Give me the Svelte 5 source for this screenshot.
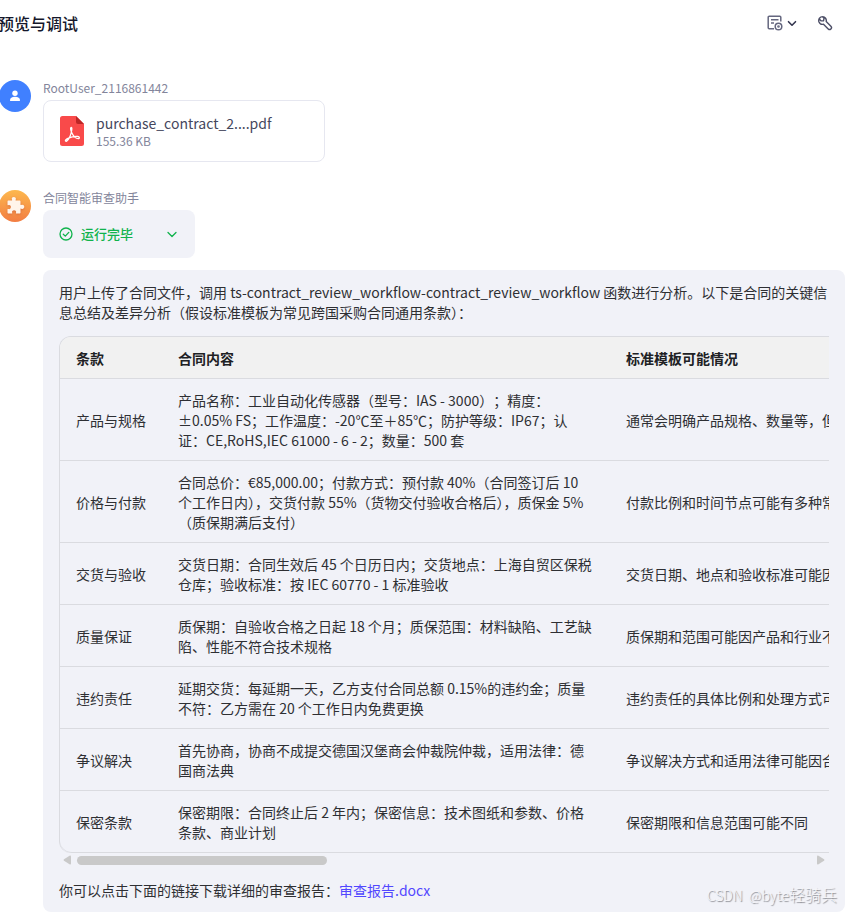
<script>
  const columns = ['条款', '合同内容', '标准模板可能情况'];

  const rows = [
    {
      term: '产品与规格',
      content: '产品名称：工业自动化传感器（型号：IAS - 3000）\u200b；精度：±0.05% FS；工作温度：-20℃至＋85℃；防护等级：IP67；认证：CE,RoHS,IEC 61000 - 6 - 2；数量：500 套',
      template: '通常会明确产品规格、数量等，但'
    },
    {
      term: '价格与付款',
      content: '合同总价：€85,000.00；付款方式：预付款 40%（合同签订后 10 个工作日内），交货付款 55%（货物交付验收合格后），质保金 5%（质保期满后支付）',
      template: '付款比例和时间节点可能有多种常'
    },
    {
      term: '交货与验收',
      content: '交货日期：合同生效后 45 个日历日内；交货地点：上海自贸区保税仓库；验收标准：按 IEC 60770 - 1 标准验收',
      template: '交货日期、地点和验收标准可能因'
    },
    {
      term: '质量保证',
      content: '质保期：自验收合格之日起 18 个月；质保范围：材料缺陷、工艺缺陷、性能不符合技术规格',
      template: '质保期和范围可能因产品和行业不'
    },
    {
      term: '违约责任',
      content: '延期交货：每延期一天，乙方支付合同总额 0.15%的违约金；质量不符：乙方需在 20 个工作日内免费更换',
      template: '违约责任的具体比例和处理方式可'
    },
    {
      term: '争议解决',
      content: '首先协商，协商不成提交德国汉堡商会仲裁院仲裁，适用法律：德国商法典',
      template: '争议解决方式和适用法律可能因合'
    },
    {
      term: '保密条款',
      content: '保密期限：合同终止后 2 年内；保密信息：技术图纸和参数、价格条款、商业计划',
      template: '保密期限和信息范围可能不同'
    }
  ];
</script>

<div class="page">
  <header class="topbar">
    <h1>预览与调试</h1>
    <div class="tools">
      <button class="tool" aria-label="Preview settings">
        <svg width="16" height="16" viewBox="0 0 16 16" fill="none" stroke="#65677f" stroke-width="1.500">
          <path d="M7 13.700H2.200a1 1 0 0 1-1-1V2.200a1 1 0 0 1 1-1h10.600a1 1 0 0 1 1 1V6.500" />
          <path d="M4 4.700h7.500M4 8h3" />
          <circle cx="11.500" cy="11.500" r="3.300" />
          <circle cx="11.500" cy="11.500" r="0.600" />
        </svg>
        <svg width="10" height="16" viewBox="0 0 10 16" fill="none" stroke="#34364f" stroke-width="1.600" stroke-linecap="round" stroke-linejoin="round">
          <path d="M1.500 6.700 5 10.200l3.500-3.500" />
        </svg>
      </button>
      <button class="tool" aria-label="Debug">
        <svg width="16" height="16" viewBox="0 0 16 16" fill="none" stroke="#4c4e66" stroke-width="1.400" stroke-linejoin="round">
          <path d="M5.600 1.600A4 4 0 0 0 1.900 6.700a4 4 0 0 0 4.600 2.500l4.700 4.700a1.850 1.850 0 0 0 2.700-2.700L9.200 6.500A4 4 0 0 0 5.600 1.600L7 3.300 6.600 5.700 4.200 5.900 2.500 4.200" />
        </svg>
      </button>
    </div>
  </header>

  <main class="chat">
    <section class="message">
      <div class="avatar user">
        <svg width="12" height="12" viewBox="0 0 12 12" fill="#fff">
          <circle cx="6" cy="3.300" r="2.700" />
          <path d="M1 10.200C1 8 2.800 6.800 6 6.800s5 1.200 5 3.400c0 .6-.3.900-.9.900H1.900c-.6 0-.9-.3-.9-.9z" />
        </svg>
      </div>
      <div class="body">
        <div class="name">RootUser_2116861442</div>
        <div class="file">
          <svg width="24" height="30" viewBox="0 0 24 30">
            <path d="M2.500 0H16l8 8v19.500a2.500 2.500 0 0 1-2.500 2.500h-19A2.500 2.500 0 0 1 0 27.500v-25A2.500 2.500 0 0 1 2.500 0z" fill="#f94a4a" />
            <path d="M16 0l8 8h-6a2 2 0 0 1-2-2z" fill="#bc2626" />
            <path d="M11.400 11.300c-1.300 0-.8 3.300.6 6 1.600 3.100 4.200 5.300 6.200 5.300 1.700 0 1.500-2-.5-2.200-3-.3-6.700.5-9.200 1.700-2.200 1-3.600 2.400-2.900 3 1 .9 3.200-1.900 4.600-5.200 1.300-3 2.200-8.500 1.200-8.600z" fill="none" stroke="#fff" stroke-width="1.300" />
          </svg>
          <div class="file-info">
            <div class="file-name">purchase_contract_2....pdf</div>
            <div class="file-size">155.36 KB</div>
          </div>
        </div>
      </div>
    </section>

    <section class="message">
      <div class="avatar bot">
        <svg width="20" height="20" viewBox="0 0 20 20" fill="#fff4ea">
          <path d="M3.600 4.500h3.100c.5 0 .5-.4.300-.8C6.200 2 7.200.900 8.800.900s2.600 1.100 1.900 2.800c-.2.400-.2.800.3.800h3.400c.7 0 1.100.4 1.100 1.100v2.900c0 .5.4.6.8.4 1.500-.7 3 .3 3 1.900s-1.500 2.600-3 1.900c-.4-.2-.8-.1-.8.400v3.300c0 .7-.4 1.100-1.100 1.100h-3c-.5 0-.6-.4-.4-.8.600-1.300-.4-2.500-1.900-2.500s-2.500 1.200-1.900 2.500c.2.400.1.800-.4.800H3.600c-.7 0-1.100-.4-1.100-1.100v-3c0-.5.4-.6.8-.4 1.400.5 2.600-.5 2.600-1.900S4.700 8.700 3.300 9.200c-.4.200-.8 0-.8-.5V5.600c0-.7.4-1.100 1.100-1.100z" />
        </svg>
      </div>
      <div class="body">
        <div class="name">合同智能审查助手</div>
        <button class="status">
          <svg width="14" height="14" viewBox="0 0 14 14" fill="none" stroke="#10b34c" stroke-width="1.300" stroke-linecap="round" stroke-linejoin="round">
            <circle cx="7" cy="7" r="6" />
            <path d="M4.300 7.200l2 1.900 3.500-3.700" />
          </svg>
          <span>运行完毕</span>
          <svg class="arrow" width="10" height="10" viewBox="0 0 10 10" fill="none" stroke="#10b34c" stroke-width="1.300" stroke-linecap="round" stroke-linejoin="round">
            <path d="M1 3.500l4 4 4-4" />
          </svg>
        </button>

        <article class="bubble">
          <p>用户上传了合同文件，调用 ts-contract_review_workflow-contract_review_workflow 函数进行分析。以下是合同的关键信息总结及差异分析（假设标准模板为常见跨国采购合同通用条款）：</p>

          <div class="table-wrap">
            <table>
              <colgroup>
                <col class="col-term" />
                <col class="col-content" />
                <col />
              </colgroup>
              <thead>
                <tr>
                  {#each columns as column}
                    <th scope="col">{column}</th>
                  {/each}
                </tr>
              </thead>
              <tbody>
                {#each rows as row}
                  <tr>
                    <td>{row.term}</td>
                    <td>{row.content}</td>
                    <td class="nowrap">{row.template}</td>
                  </tr>
                {/each}
              </tbody>
            </table>
          </div>

          <div class="scrollbar" aria-hidden="true">
            <svg width="8" height="10" viewBox="0 0 8 10" fill="#c9c9c9">
              <path d="M1 4.300 6.500.700Q8 0 8 1.500v7Q8 10 6.500 9.300L1 5.700Q0 5 1 4.300z" />
            </svg>
            <div class="track"><div class="thumb"></div></div>
            <svg width="8" height="10" viewBox="0 0 8 10" fill="#c9c9c9">
              <path d="M7 4.300 1.500.700Q0 0 0 1.500v7Q0 10 1.500 9.300L7 5.700Q8 5 7 4.300z" />
            </svg>
          </div>

          <p>你可以点击下面的链接下载详细的审查报告：<a href="#report">审查报告.docx</a></p>
        </article>
      </div>
    </section>
  </main>

  <div class="watermark"><span>CSDN</span><span class="handle">@byte</span>轻骑兵</div>
</div>

<style>
  :global(body) {
    margin: 0;
    background: #fff;
  }

  .page {
    position: relative;
    overflow: hidden;
    font-family: "Noto Sans CJK SC", sans-serif;
    font-size: 14px;
    line-height: 20px;
    color: #2e2f33;
  }

  .topbar {
    display: flex;
    align-items: center;
    justify-content: space-between;
    height: 46px;
    padding-right: 16px;
  }

  h1 {
    margin: 0 0 0 -2px;
    font-size: 16px;
    line-height: 24px;
    font-weight: 500;
    color: #15172b;
  }

  .tools {
    display: flex;
    gap: 20px;
  }

  .tool {
    display: flex;
    align-items: center;
    gap: 4px;
    padding: 0;
    border: none;
    background: none;
    cursor: pointer;
  }

  .chat {
    display: flex;
    flex-direction: column;
    gap: 28px;
    padding: 34px 4px 0 0;
    margin-left: -1px;
  }

  .message {
    display: flex;
    gap: 12px;
  }

  .avatar {
    display: flex;
    align-items: center;
    justify-content: center;
    flex: none;
    width: 32px;
    height: 32px;
    border-radius: 50%;
  }

  .user {
    background: #4080ff;
  }

  .bot {
    background: linear-gradient(#fdb84e, #f27d42);
  }

  .bot svg {
    filter: drop-shadow(0 1px 1px #d9703e);
  }

  .body {
    flex: 1;
    min-width: 0;
  }

  .name {
    font-size: 12px;
    line-height: 16px;
    margin-bottom: 4px;
    color: #83859b;
  }

  .file {
    display: flex;
    align-items: center;
    gap: 12px;
    box-sizing: border-box;
    max-width: 282px;
    padding: 12px 16px;
    border: 1px solid #e6e7f0;
    border-radius: 8px;
  }

  .file-name {
    color: #45475d;
  }

  .file-size {
    font-size: 12px;
    line-height: 16px;
    color: #83859b;
  }

  .status {
    display: flex;
    align-items: center;
    gap: 8px;
    width: 152px;
    height: 48px;
    padding: 0 18px 0 16px;
    margin-bottom: 12px;
    border: none;
    border-radius: 8px;
    background: #f1f2f8;
    font-family: inherit;
    font-size: 13px;
    line-height: 20px;
    font-weight: 500;
    color: #10b34c;
    cursor: pointer;
  }

  .arrow {
    margin-left: auto;
  }

  .bubble {
    padding: 12px 16px;
    border-radius: 8px;
    background: #f1f2f8;
  }

  p {
    margin: 0;
  }

  a {
    color: #5147ff;
    text-decoration: none;
  }

  .table-wrap {
    overflow: hidden;
    margin-top: 14px;
  }

  table {
    table-layout: fixed;
    width: 2260px;
    border: 1px solid #dadbe0;
    border-bottom: none;
    border-radius: 12px;
    border-spacing: 0;
    overflow: hidden;
  }

  .col-term {
    width: 102px;
  }

  .col-content {
    width: 448px;
  }

  th,
  td {
    padding: 11px 16px 10px;
    border-bottom: 1px solid #dadbe0;
    text-align: left;
    vertical-align: middle;
  }

  th {
    background: #f1f1f1;
    font-weight: 600;
    color: #202124;
  }

  tr:last-child td:first-child {
    border-bottom-left-radius: 12px;
  }

  .nowrap {
    white-space: nowrap;
  }

  .scrollbar {
    display: flex;
    align-items: center;
    gap: 6px;
    padding: 2px 4px;
    margin-bottom: 13px;
  }

  .track {
    flex: 1;
  }

  .thumb {
    width: 34%;
    height: 9px;
    border-radius: 5px;
    background: #c9c9c9;
  }

  .watermark {
    position: absolute;
    right: 12px;
    bottom: 5px;
    font-size: 16px;
    line-height: 24px;
    font-weight: 300;
    color: #f7f7fa;
    text-shadow: 1px 1px 1px #85868c;
  }

  .watermark span {
    font-size: 14px;
  }

  .watermark .handle {
    margin-left: 6px;
  }
</style>
